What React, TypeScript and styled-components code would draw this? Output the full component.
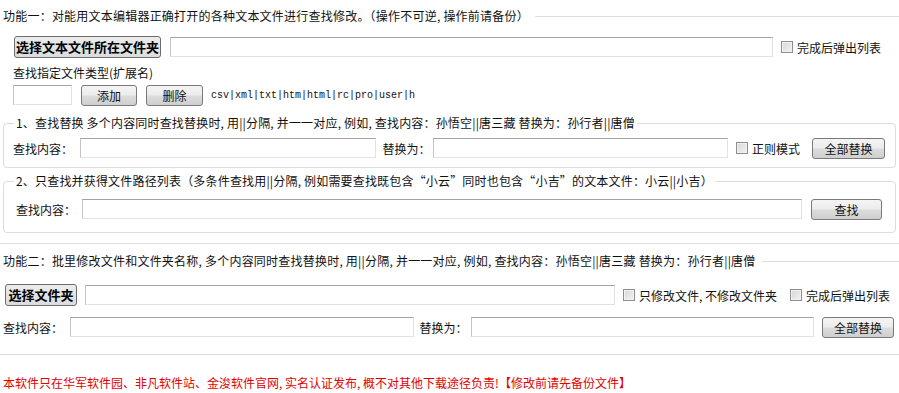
import styled, { createGlobalStyle } from 'styled-components';

const GlobalStyle = createGlobalStyle`
  * { box-sizing: border-box; }
  body {
    margin: 0;
    background: #fff;
    font-family: "Noto Sans CJK SC", "Liberation Sans", sans-serif;
    font-size: 12px;
    color: #111;
  }
`;

const Page = styled.div`
  width: 899px;
`;

const Section = styled.section<{ $pb: number }>`
  padding: 0 3px ${(p) => p.$pb}px;
  border-bottom: 1px solid #dedede;
`;

const SectionTitle = styled.div<{ $mt: number }>`
  display: flex;
  align-items: center;
  margin-top: ${(p) => p.$mt}px;
  line-height: 16px;
  letter-spacing: 0.22px;
  white-space: nowrap;

  &::after {
    content: '';
    flex: 1;
    height: 1px;
    margin: 0 -3px 0 6px;
    background: #dedede;
  }
`;

const Row = styled.div<{ $mt: number; $pl?: number; $pr?: number }>`
  display: flex;
  align-items: center;
  margin-top: ${(p) => p.$mt}px;
  padding-left: ${(p) => p.$pl ?? 0}px;
  padding-right: ${(p) => p.$pr ?? 0}px;
  height: 22px;
  white-space: nowrap;
`;

const Hint = styled.div<{ $mt: number; $pl: number }>`
  margin-top: ${(p) => p.$mt}px;
  padding-left: ${(p) => p.$pl}px;
  line-height: 16px;
`;

const TextInput = styled.input<{ $w?: number; $ml?: number }>`
  height: 20px;
  ${(p) => (p.$w ? `width: ${p.$w}px;` : 'flex: 1; min-width: 0;')}
  margin-left: ${(p) => p.$ml ?? 0}px;
  border: 1px solid;
  border-color: #a3a3a3 #e2e2e2 #e2e2e2 #c4c4c4;
  background: #fff;
  padding: 0 3px;
  font: inherit;
  outline: none;
`;

const BoldButton = styled.button<{ $w: number }>`
  width: ${(p) => p.$w}px;
  height: 22px;
  padding: 0;
  border: 1px solid #6c6c6c;
  border-radius: 3px;
  background: linear-gradient(#ececec, #dcdcdc);
  font-family: "Noto Sans CJK SC", sans-serif;
  font-size: 13px;
  font-weight: bold;
  color: #000;
  line-height: 20px;
`;

const Button = styled.button<{ $w: number; $ml: number }>`
  width: ${(p) => p.$w}px;
  height: 21px;
  margin-left: ${(p) => p.$ml}px;
  padding: 0;
  border: 1px solid #7a7a7a;
  border-radius: 3px;
  background: linear-gradient(#f4f4f4 0%, #ececec 48%, #dcdcdc 52%, #cfcfcf 100%);
  font-family: "Noto Sans CJK SC", sans-serif;
  font-size: 12px;
  color: #111;
  line-height: 19px;
`;

const Check = styled.label<{ $ml: number }>`
  display: flex;
  align-items: center;
  gap: 4px;
  margin-left: ${(p) => p.$ml}px;
`;

const Box = styled.span`
  width: 12px;
  height: 12px;
  border: 1px solid #8e8e8e;
  background: linear-gradient(135deg, #d6d6d6, #f3f3f3);
  box-shadow: inset 0 0 0 1px #f2f2f2;
`;

const FieldLabel = styled.span<{ $ml?: number }>`
  margin-left: ${(p) => p.$ml ?? 0}px;
`;

const Exts = styled.span`
  margin-left: 8px;
  font-family: "Liberation Mono", monospace;
  font-size: 10px;
  color: #111;
`;

const Group = styled.fieldset<{ $mt: number; $pb: number }>`
  margin: ${(p) => p.$mt}px 0 0;
  padding: 0 0 ${(p) => p.$pb}px 9px;
  border: 1px solid #dcdcdc;
  border-radius: 4px;
`;

const Legend = styled.legend`
  padding: 0 2px;
  margin-left: 1px;
  line-height: 16px;
  letter-spacing: 0.18px;
  white-space: nowrap;
`;

const Footer = styled.div`
  margin-top: 20px;
  padding-left: 3px;
  line-height: 16px;
  color: #e40000;
`;

const Checkbox = ({ label, ml }: { label: string; ml: number }) => (
  <Check $ml={ml}>
    <Box />
    {label}
  </Check>
);

export default function App() {
  return (
    <Page>
      <GlobalStyle />
      <Section $pb={10}>
        <SectionTitle $mt={8}>
          功能一：对能用文本编辑器正确打开的各种文本文件进行查找修改。（操作不可逆, 操作前请备份）
        </SectionTitle>
        <Row $mt={12} $pl={11} $pr={15}>
          <BoldButton $w={147}>选择文本文件所在文件夹</BoldButton>
          <TextInput $ml={9} />
          <Checkbox label="完成后弹出列表" ml={8} />
        </Row>
        <Hint $mt={7} $pl={10}>查找指定文件类型(扩展名)</Hint>
        <Row $mt={3} $pl={10}>
          <TextInput $w={59} />
          <Button $w={56} $ml={9}>添加</Button>
          <Button $w={57} $ml={9}>删除</Button>
          <Exts>csv|xml|txt|htm|html|rc|pro|user|h</Exts>
        </Row>

        <Group $mt={9} $pb={8}>
          <Legend>1、查找替换 多个内容同时查找替换时, 用||分隔, 并一一对应, 例如, 查找内容：孙悟空||唐三藏 替换为：孙行者||唐僧</Legend>
          <Row $mt={6} $pr={10}>
            <FieldLabel>查找内容：</FieldLabel>
            <TextInput $ml={7} />
            <FieldLabel $ml={7}>替换为：</FieldLabel>
            <TextInput $ml={2} />
            <Checkbox label="正则模式" ml={8} />
            <Button $w={73} $ml={12}>全部替换</Button>
          </Row>
        </Group>

        <Group $mt={5} $pb={12}>
          <Legend>2、只查找并获得文件路径列表（多条件查找用||分隔, 例如需要查找既包含“小云”同时也包含“小吉”的文本文件：小云||小吉）</Legend>
          <Row $mt={9} $pl={3} $pr={13}>
            <FieldLabel>查找内容：</FieldLabel>
            <TextInput $ml={6} />
            <Button $w={71} $ml={9}>查找</Button>
          </Row>
        </Group>
      </Section>

      <Section $pb={16}>
        <SectionTitle $mt={9}>
          功能二：批里修改文件和文件夹名称, 多个内容同时查找替换时, 用||分隔, 并一一对应, 例如, 查找内容：孙悟空||唐三藏 替换为：孙行者||唐僧
        </SectionTitle>
        <Row $mt={15} $pl={2} $pr={6}>
          <BoldButton $w={72}>选择文件夹</BoldButton>
          <TextInput $ml={8} />
          <Checkbox label="只修改文件, 不修改文件夹" ml={8} />
          <Checkbox label="完成后弹出列表" ml={13} />
        </Row>
        <Row $mt={10} $pr={2}>
          <FieldLabel>查找内容：</FieldLabel>
          <TextInput $ml={7} />
          <FieldLabel $ml={6}>替换为：</FieldLabel>
          <TextInput $ml={3} />
          <Button $w={72} $ml={8}>全部替换</Button>
        </Row>
      </Section>

      <Footer>
        本软件只在华军软件园、非凡软件站、金浚软件官网, 实名认证发布, 概不对其他下载途径负责!【修改前请先备份文件】
      </Footer>
    </Page>
  );
}
